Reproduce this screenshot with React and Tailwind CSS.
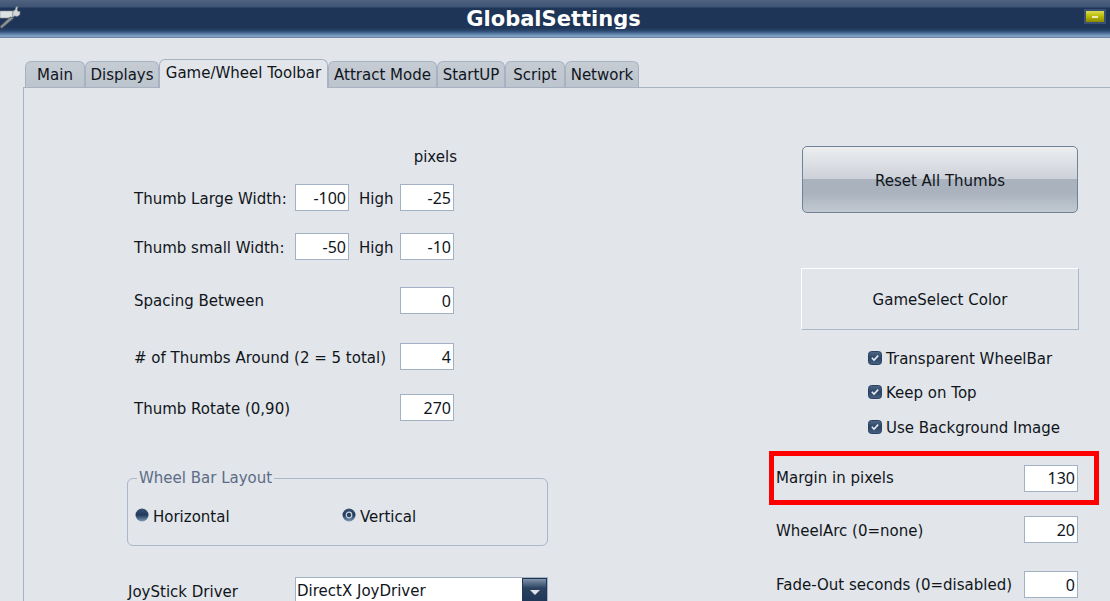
import React from 'react';

const TABS = [
    { label: 'Main', width: 'w-[60px]' },
    { label: 'Displays', width: 'w-[74px]' },
    { label: 'Game/Wheel Toolbar', width: 'w-[169px]', active: true },
    { label: 'Attract Mode', width: 'w-[109px]' },
    { label: 'StartUP', width: 'w-[68px]' },
    { label: 'Script', width: 'w-[60px]' },
    { label: 'Network', width: 'w-[74px]' },
];

function Field({ value, className = '' }) {
    return (
        <div className={`w-[54px] h-[27px] shrink-0 bg-white border border-[#a3b1c4] flex items-center justify-end pr-[2px] text-[16px] font-['Noto_Sans',sans-serif] ${className}`}>
            {value}
        </div>
    );
}

function Check({ label, className = '' }) {
    return (
        <div className={`flex items-center h-[20px] ml-[99px] ${className}`}>
            <svg width="14" height="14" viewBox="0 0 14 14" className="shrink-0">
                <defs>
                    <linearGradient id="chk" x1="0" y1="0" x2="0" y2="1">
                        <stop offset="0" stopColor="#4f6888" />
                        <stop offset="0.5" stopColor="#2c4567" />
                        <stop offset="1" stopColor="#48617f" />
                    </linearGradient>
                </defs>
                <rect x="0.5" y="0.5" width="13" height="13" rx="3" fill="url(#chk)" stroke="#2a4163" />
                <path d="M3.800 6.800l2.200 2.200 4.200-4.400" fill="none" stroke="#e8edf3" strokeWidth="1.600" />
            </svg>
            <span className="ml-[4px] mt-[2px]">{label}</span>
        </div>
    );
}

function Radio({ checked }) {
    return (
        <svg width="14" height="14" viewBox="0 0 14 14" className="shrink-0">
            <defs>
                <linearGradient id="rad" x1="0" y1="0" x2="0" y2="1">
                    <stop offset="0" stopColor="#3a5373" />
                    <stop offset="0.5" stopColor="#22385a" />
                    <stop offset="1" stopColor="#7f9cba" />
                </linearGradient>
            </defs>
            <circle cx="7" cy="7" r="6.500" fill="url(#rad)" />
            {checked && <circle cx="7" cy="7" r="2.800" fill="#2a405f" stroke="#c9d3de" strokeWidth="1.200" />}
        </svg>
    );
}

export default function App() {
    return (
        <div className="h-[601px] w-[1110px] overflow-hidden bg-[#e2e5e9] text-[15px] leading-[20px] text-[#10151c] font-['DejaVu_Sans','Liberation_Sans',sans-serif]">
            {/* Title bar */}
            <div className="relative h-[38px] border-b border-[#6f85a0] bg-[linear-gradient(to_bottom,#50637f_0px,#3e5475_7px,#1f3557_8px,#1f3557_28px,#2b4a72_31px,#7ea3c6_36px)]">
                <div className="h-[29px] overflow-hidden flex justify-center">
                    <span className="ml-[-3px] mt-[3px] text-[21px] leading-[32px] font-bold text-white">GlobalSettings</span>
                </div>
                {/* wrench icon */}
                <svg width="22" height="30" viewBox="0 0 22 30" className="absolute left-0 top-0">
                    <path d="M0 11h13v7H0z" fill="#dfe2e5" stroke="#8d9299" strokeWidth="0.600" />
                    <path d="M13 11l2-1 1-3 2-.5-1 3.500 1.500 1.500 1.500-.5 0 3.500-2.500 2-3-.5-2 1.500z" fill="#d3d6da" stroke="#70757c" strokeWidth="0.600" />
                    <path d="M10 17L0 26.500 1.500 28.500 14 18z" fill="#8b9095" stroke="#4f545a" strokeWidth="0.700" />
                </svg>
                {/* minimize button */}
                <div className="absolute left-[1084px] top-[9px] w-[22px] h-[15px] border-2 border-[#3c5172] bg-[linear-gradient(to_bottom,#dcdc55,#b9b900_50%,#8a8a00)] flex items-center justify-center">
                    <div className="w-[6px] h-[2px] bg-[#ecebc0]"></div>
                </div>
            </div>

            {/* Tabs */}
            <div className="flex items-end h-[49px] ml-[25px]">
                {TABS.map(tab => (
                    <div
                        key={tab.label}
                        className={`${tab.width} flex items-center justify-center rounded-t-[6px] border border-b-0 border-[#a7b3c2] whitespace-nowrap ${tab.active ? 'h-[29px] pb-[3px] bg-[#e2e5e9] relative z-10 -mb-px' : 'h-[26px] bg-[linear-gradient(to_bottom,#c6ccd4,#bcc4cd)]'}`}
                    >
                        {tab.label}
                    </div>
                ))}
            </div>

            {/* Panel */}
            <div className="ml-[23px] border-l border-t border-[#a7b3c2] h-[514px] flex pl-[103px]">
                {/* Left column */}
                <div className="w-[421px] shrink-0 pt-[59px]">
                    <div className="h-[20px] text-right pr-[91px]">pixels</div>

                    <div className="flex items-center h-[27px] mt-[17px] pl-[7px]">
                        <span className="w-[161px] mt-[2px] whitespace-nowrap">Thumb Large Width:</span>
                        <Field value="-100" />
                        <span className="w-[51px] mt-[2px] pl-[10px]">High</span>
                        <Field value="-25" />
                    </div>
                    <div className="flex items-center h-[27px] mt-[22px] pl-[7px]">
                        <span className="w-[161px] mt-[3px] whitespace-nowrap">Thumb small Width:</span>
                        <Field value="-50" />
                        <span className="w-[51px] mt-[3px] pl-[10px]">High</span>
                        <Field value="-10" />
                    </div>
                    <div className="flex items-center h-[27px] mt-[27px] pl-[7px]">
                        <span className="w-[266px]">Spacing Between</span>
                        <Field value="0" />
                    </div>
                    <div className="flex items-center h-[27px] mt-[29px] pl-[7px]">
                        <span className="w-[266px] mt-[2px] whitespace-nowrap">{'# of Thumbs Around (2 = 5 total)'}</span>
                        <Field value="4" />
                    </div>
                    <div className="flex items-center h-[27px] mt-[24px] pl-[7px]">
                        <span className="w-[266px] mt-[2px]">Thumb Rotate (0,90)</span>
                        <Field value="270" />
                    </div>

                    <fieldset className="mt-[47px] h-[78px] border border-[#a9b8c9] rounded-[6px]">
                        <legend className="ml-[9px] px-[2px] text-[#5b6c88]">Wheel Bar Layout</legend>
                        <div className="flex items-center h-[20px] mt-[17px] pl-[7px]">
                            <Radio />
                            <span className="ml-[4px] mt-[3px] w-[189px]">Horizontal</span>
                            <Radio checked />
                            <span className="ml-[4px] mt-[3px]">Vertical</span>
                        </div>
                    </fieldset>

                    <div className="flex items-start mt-[31px]">
                        <span className="w-[168px] pl-[1px] mt-[5px]">JoyStick Driver</span>
                        <div className="w-[253px] h-[30px] bg-white border border-[#a3b1c4] flex">
                            <span className="flex-1 pl-[1px] leading-[26px]">DirectX JoyDriver</span>
                            <div className="w-[25px] border border-[#20375a] bg-[linear-gradient(to_bottom,#8494aa,#4f6580_20%,#2a4160_35%,#1e3455)] flex justify-center pt-[11px]">
                                <div className="w-0 h-0 border-x-[5px] border-x-transparent border-t-[5px] border-t-[#dfe4ea]"></div>
                            </div>
                        </div>
                    </div>
                </div>

                {/* Right column */}
                <div className="w-[330px] shrink-0 ml-[221px] pt-[58px]">
                    <button className="block ml-[33px] w-[276px] h-[67px] pt-[2px] rounded-[5px] border border-[#6f8297] bg-[linear-gradient(to_bottom,#eceef0,#cdd1d8_49%,#a9b2bd_49%,#a9b2bd_70%,#c2c9d1_100%)]">
                        Reset All Thumbs
                    </button>
                    <button className="block ml-[32px] mt-[55px] w-[278px] h-[62px] pt-[2px] border border-white border-r-[#a9b8c9] border-b-[#a9b8c9]">
                        GameSelect Color
                    </button>

                    <Check label="Transparent WheelBar" className="mt-[18px]" />
                    <Check label="Keep on Top" className="mt-[14px]" />
                    <Check label="Use Background Image" className="mt-[15px]" />

                    <div className="flex items-center justify-between mt-[14px] h-[54px] border-[5px] border-[#ff0000] pl-[2px] pr-[16px]">
                        <span>Margin in pixels</span>
                        <Field value="130" />
                    </div>
                    <div className="flex items-center justify-between mt-[11px] h-[27px] pl-[7px] pr-[21px]">
                        <span className="mt-[2px]">WheelArc (0=none)</span>
                        <Field value="20" />
                    </div>
                    <div className="flex items-center justify-between mt-[28px] h-[27px] pl-[7px] pr-[21px]">
                        <span>Fade-Out seconds (0=disabled)</span>
                        <Field value="0" />
                    </div>
                </div>
            </div>
        </div>
    );
}
